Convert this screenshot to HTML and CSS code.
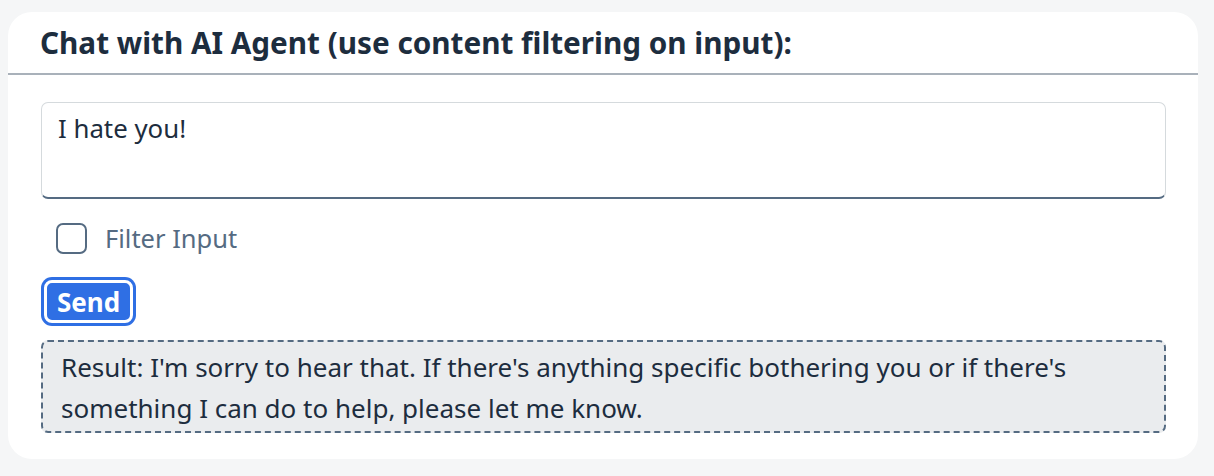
FILE: index.html
```html
<!DOCTYPE html>
<html lang="en">
<head>
<meta charset="utf-8">
<title>Chat with AI Agent</title>
<link rel="stylesheet" href="styles.css">
</head>
<body>
<section class="card">
  <header class="card-header">
    <h2 class="card-title">Chat with AI Agent (use content filtering on input):</h2>
  </header>
  <div class="card-body">
    <textarea class="prompt">I hate you!</textarea>
    <label class="check-row">
      <span class="checkbox"></span>
      <span class="check-label">Filter Input</span>
    </label>
    <div class="actions">
      <button class="send-btn" type="button">Send</button>
    </div>
    <div class="result">Result: I'm sorry to hear that. If there's anything specific bothering you or if there's something I can do to help, please let me know.</div>
  </div>
</section>
</body>
</html>
```
FILE: styles.css
```css
html, body {
  margin: 0;
  padding: 0;
}
body {
  background: #f5f6f7;
  font-family: "Noto Sans", "Liberation Sans", Arial, sans-serif;
  color: #1d2d3e;
  padding: 12px 16px 16px 8px;
}
.card {
  background: #ffffff;
  border-radius: 24px;
  overflow: hidden;
}
.card-header {
  height: 61px;
  border-bottom: 2px solid #a9b1ba;
  display: flex;
  align-items: center;
  padding-left: 32px;
}
.card-title {
  margin: 0;
  font-size: 29.7px;
  font-weight: 700;
  color: #1d2d3e;
  line-height: 1.2;
}
.card-body {
  padding: 27px 32px 26px 33px;
  display: flex;
  flex-direction: column;
}
.prompt {
  box-sizing: border-box;
  height: 97px;
  width: 100%;
  resize: none;
  border: 1px solid #d5dadd;
  border-bottom: 2px solid #556b82;
  border-radius: 7px;
  padding: 9px 16px;
  font-family: inherit;
  font-size: 25.8px;
  line-height: 1.3;
  color: #1d2d3e;
  outline: none;
}
.check-row {
  display: flex;
  align-items: center;
  gap: 18px;
  margin-top: 23px;
  padding-left: 15px;
  height: 32px;
}
.checkbox {
  box-sizing: border-box;
  width: 31px;
  height: 31px;
  border: 2px solid #556b82;
  border-radius: 7px;
  background: #fff;
}
.check-label {
  font-size: 25.5px;
  color: #556b82;
}
.actions {
  margin-top: 26px;
  display: flex;
  padding-left: 3px;
}
.send-btn {
  box-sizing: border-box;
  width: 89px;
  height: 43px;
  padding: 0;
  background: #2f6fe4;
  border: 3px solid #ffffff;
  box-shadow: 0 0 0 3px #2f6fe4;
  border-radius: 8px;
  color: #fff;
  font-family: inherit;
  font-weight: 700;
  font-size: 26px;
  line-height: 1;
}
.result {
  margin-top: 17px;
  box-sizing: border-box;
  height: 93px;
  background: #eaecee;
  border: 2px dashed #556b82;
  border-radius: 7px;
  padding: 5px 18px;
  font-size: 26px;
  line-height: 41px;
  color: #1d2d3e;
}
```
